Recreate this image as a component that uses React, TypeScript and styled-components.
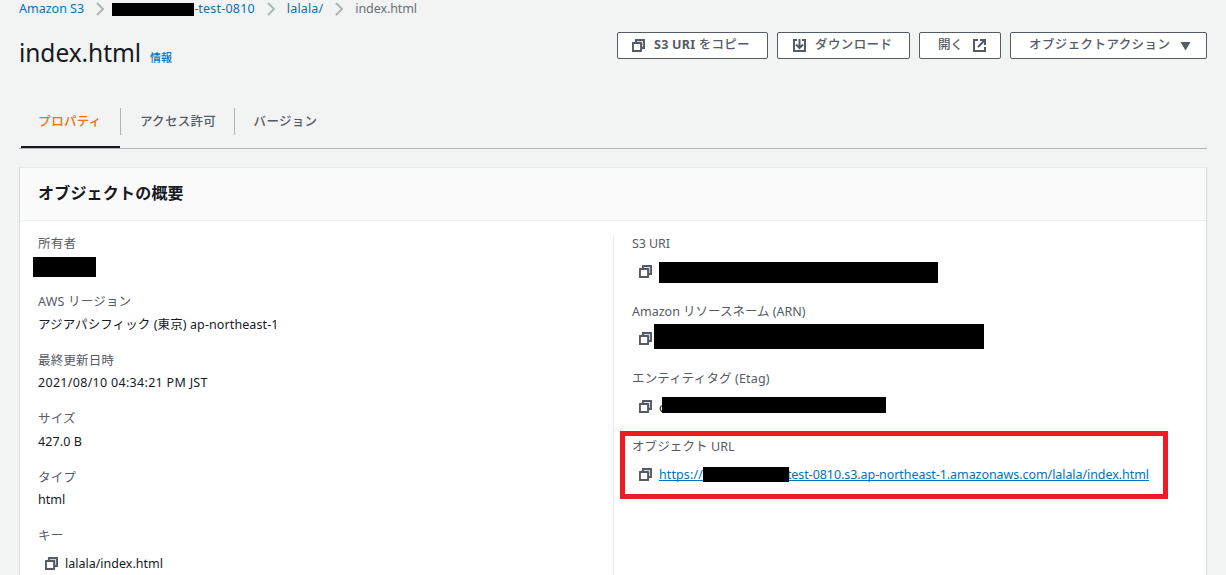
import React from 'react';
import styled, { createGlobalStyle } from 'styled-components';

const GlobalStyle = createGlobalStyle`
  * { box-sizing: border-box; }
  html, body { margin: 0; height: 575px; overflow: hidden; }
  body {
    background: #f2f3f3;
    color: #16191f;
    font-family: "Noto Sans", "Noto Sans CJK JP", sans-serif;
    font-size: 12.5px;
  }
`;

const Page = styled.main`
  height: 575px;
  overflow: hidden;
  padding: 0 19px;
`;

const Text = styled.span<{ $track?: number }>`
  letter-spacing: ${(p) => p.$track ?? 0}px;
  white-space: nowrap;
`;

const Link = styled.a<{ $track?: number; $underline?: boolean }>`
  color: #0073bb;
  letter-spacing: ${(p) => p.$track ?? 0}px;
  text-decoration: ${(p) => (p.$underline ? 'underline' : 'none')};
  text-decoration-thickness: 1px;
  text-decoration-skip-ink: none;
  text-underline-offset: 1px;
  white-space: nowrap;
`;

const Redaction = styled.span<{ $w: number; $h: number; $ml?: number; $mr?: number; $mt?: number }>`
  flex: none;
  display: block;
  position: relative;
  z-index: 1;
  width: ${(p) => p.$w}px;
  height: ${(p) => p.$h}px;
  margin-left: ${(p) => p.$ml ?? 0}px;
  margin-right: ${(p) => p.$mr ?? 0}px;
  margin-top: ${(p) => p.$mt ?? 0}px;
  background: #000;
`;

const Breadcrumbs = styled.nav`
  display: flex;
  align-items: center;
  height: 18px;
  line-height: 18px;
`;

const Current = styled(Text)`
  color: #687078;
`;

const ChevronSvg = styled.svg`
  flex: none;
  width: 8px;
  height: 14px;
  margin: 0 12px;
`;

const Header = styled.header`
  display: flex;
  justify-content: space-between;
  height: 88px;
`;

const TitleGroup = styled.div`
  display: flex;
  align-items: baseline;
  gap: 9px;
  padding-top: 18px;
  height: 54px;
`;

const Title = styled.h1`
  margin: 0;
  font-size: 24.5px;
  font-weight: 400;
  line-height: 34px;
  letter-spacing: -0.05px;
`;

const Info = styled.a`
  color: #0073bb;
  font-size: 11px;
  font-weight: 500;
`;

const Actions = styled.div`
  display: flex;
  gap: 9px;
  padding-top: 14px;
`;

const Button = styled.button<{ $w: number; $pl: number; $gap?: number }>`
  display: flex;
  align-items: center;
  gap: ${(p) => p.$gap ?? 9}px;
  width: ${(p) => p.$w}px;
  height: 27px;
  padding: 0 0 0 ${(p) => p.$pl}px;
  border: 1px solid #545b64;
  border-radius: 2px;
  background: #fff;
  color: #545b64;
  font: 500 12.5px/20px "Noto Sans", "Noto Sans CJK JP", sans-serif;

  ${Text} {
    margin-top: -2px;
  }
`;

const Strong = styled.b`
  font-weight: 700;
`;

const Icon = styled.svg`
  flex: none;
  width: 13px;
  height: 13px;
  fill: none;
  stroke: #545b64;
  stroke-width: 2;
`;

const Tabs = styled.div`
  display: flex;
  height: 43px;
  border-bottom: 1px solid #aab7b8;
`;

const Tab = styled.div<{ $active?: boolean; $w: number }>`
  position: relative;
  display: flex;
  justify-content: center;
  width: ${(p) => p.$w}px;
  height: 42px;
  line-height: 32px;
  color: ${(p) => (p.$active ? '#ec7211' : '#545b64')};
  font-weight: 500;
  &:not(:last-child)::before {
    content: '';
    position: absolute;
    right: 0;
    top: 2px;
    width: 1px;
    height: 27px;
    background: #aab7b8;
  }
  &::after {
    content: '';
    display: ${(p) => (p.$active ? 'block' : 'none')};
    position: absolute;
    left: 2px;
    right: 1px;
    bottom: 0;
    height: 2px;
    background: #16191f;
  }
`;

const Panel = styled.section`
  margin-top: 18px;
  height: 420px;
  border: 1px solid #d5dbdb;
  border-top-color: #eaeded;
  background: #fff;
`;

const PanelHeader = styled.div`
  height: 53px;
  padding: 0 18px;
  border-bottom: 1px solid #eaeded;
  background: #fafafa;
`;

const PanelTitle = styled.h2`
  margin: 0;
  font-size: 16px;
  font-weight: 700;
  line-height: 50px;
  letter-spacing: 0.2px;
`;

const Columns = styled.div`
  display: flex;
  padding-top: 14px;
`;

const Column = styled.div<{ $w?: number; $divided?: boolean }>`
  width: ${(p) => (p.$w ? `${p.$w}px` : 'auto')};
  height: 360px;
  padding-left: 18px;
  border-left: ${(p) => (p.$divided ? '1px solid #eaeded' : '0')};
`;

const Field = styled.div<{ $copy?: boolean }>`
  position: relative;
  height: ${(p) => (p.$copy ? 67.6 : 58.4)}px;
`;

const Label = styled.div<{ $track?: number }>`
  height: 18px;
  line-height: 18px;
  color: #545b64;
  letter-spacing: ${(p) => p.$track ?? 0.2}px;
  white-space: nowrap;
`;

const Value = styled.div<{ $track?: number }>`
  height: 20px;
  margin-top: 3.6px;
  line-height: 19px;
  letter-spacing: ${(p) => p.$track ?? 0}px;
  white-space: nowrap;
`;

const CopyValue = styled.div`
  display: flex;
  align-items: center;
  height: 28px;
  margin-top: 4px;
  padding-left: 7px;

  > svg {
    margin-top: 0.8px;
  }
`;

const CopyText = styled.span`
  display: flex;
  align-items: center;
  padding: 2px 0 0 7px;
`;

const Highlight = styled.div`
  position: absolute;
  left: -12px;
  top: -7px;
  width: 548px;
  height: 68px;
  border: 5px solid #ed1c24;
  pointer-events: none;
`;

const Chevron = () => (
  <ChevronSvg viewBox="0 0 8 14">
    <path d="M1 1l6 6-6 6" fill="none" stroke="#aab7b8" strokeWidth="2" />
  </ChevronSvg>
);

const CopyIcon = () => (
  <Icon viewBox="0 0 13 13" strokeWidth="1.8">
    <path d="M3.900 3.500V.900h8.200v8.200H9.500" fill="#d5d8db" strokeLinejoin="round" />
    <path d="M.900 3.900h8.200v8.200H.900z" fill="#fff" strokeLinejoin="round" />
  </Icon>
);

const DownloadIcon = () => (
  <Icon viewBox="0 0 13 13">
    <path d="M4 1H1v11h11V1H9" />
    <path d="M6.500 0v8M3 5.500l3.500 3.500L10 5.500" />
  </Icon>
);

const ExternalIcon = () => (
  <Icon viewBox="0 0 13 13">
    <path d="M5 1H1v11h11V8" />
    <path d="M7 1h5v5M12 1L5 8" />
  </Icon>
);

const CaretIcon = () => (
  <Icon viewBox="0 0 13 13">
    <path d="M1.500 3h10l-5 8.500z" fill="#545b64" stroke="none" />
  </Icon>
);

export default function App() {
  return (
    <>
      <GlobalStyle />
      <Page>
        <Breadcrumbs>
          <Link>Amazon S3</Link>
          <Chevron />
          <Redaction $w={82} $h={13} $ml={-4} $mt={1} />
          <Link $track={0.2}>-test-0810</Link>
          <Chevron />
          <Link $track={0.15}>lalala/</Link>
          <Chevron />
          <Current $track={-0.08}>index.html</Current>
        </Breadcrumbs>

        <Header>
          <TitleGroup>
            <Title>index.html</Title>
            <Info>情報</Info>
          </TitleGroup>
          <Actions>
            <Button $w={151} $pl={14}><CopyIcon /><Text $track={0.25}><Strong>S3 URI</Strong> をコピー</Text></Button>
            <Button $w={133} $pl={15}><DownloadIcon /><Text $track={0.4}>ダウンロード</Text></Button>
            <Button $w={82} $pl={18} $gap={10}><Text>開く</Text><ExternalIcon /></Button>
            <Button $w={197} $pl={18}><Text $track={0.4}>オブジェクトアクション</Text><CaretIcon /></Button>
          </Actions>
        </Header>

        <Tabs>
          <Tab $active $w={102}><Text $track={0.3}>プロパティ</Text></Tab>
          <Tab $w={114}><Text $track={0.3}>アクセス許可</Text></Tab>
          <Tab $w={101}><Text $track={0.3}>バージョン</Text></Tab>
        </Tabs>

        <Panel>
          <PanelHeader><PanelTitle>オブジェクトの概要</PanelTitle></PanelHeader>
          <Columns>
            <Column $w={593}>
              <Field>
                <Label>所有者</Label>
                <Redaction $w={63} $h={20} $ml={-5} $mt={4} />
              </Field>
              <Field>
                <Label>AWS リージョン</Label>
                <Value $track={0.1}>アジアパシフィック (東京) ap-northeast-1</Value>
              </Field>
              <Field>
                <Label>最終更新日時</Label>
                <Value $track={0.3}>2021/08/10 04:34:21 PM JST</Value>
              </Field>
              <Field>
                <Label>サイズ</Label>
                <Value $track={0.1}>427.0 B</Value>
              </Field>
              <Field>
                <Label>タイプ</Label>
                <Value>html</Value>
              </Field>
              <Field $copy>
                <Label>キー</Label>
                <CopyValue><CopyIcon /><CopyText>lalala/index.html</CopyText></CopyValue>
              </Field>
            </Column>
            <Column $divided>
              <Field $copy>
                <Label $track={-0.1}>S3 URI</Label>
                <CopyValue><CopyIcon /><Redaction $w={279} $h={21} $ml={7} $mt={2} /></CopyValue>
              </Field>
              <Field $copy>
                <Label $track={0}>Amazon リソースネーム (ARN)</Label>
                <CopyValue><CopyIcon /><Redaction $w={330} $h={25} $ml={2} $mt={-5} /></CopyValue>
              </Field>
              <Field $copy>
                <Label $track={0.15}>エンティティタグ (Etag)</Label>
                <CopyValue><CopyIcon /><CopyText>c</CopyText><Redaction $w={224} $h={16} $ml={-3} $mt={-2} /></CopyValue>
              </Field>
              <Field $copy>
                <Label $track={0.1}>オブジェクト URL</Label>
                <CopyValue>
                  <CopyIcon />
                  <CopyText>
                    <Link $underline $track={0.1}>https://</Link>
                    <Redaction $w={86} $h={15} $mr={-2} />
                    <Link $underline $track={-0.065}>test-0810.s3.ap-northeast-1.amazonaws.com/lalala/index.html</Link>
                  </CopyText>
                </CopyValue>
                <Highlight />
              </Field>
            </Column>
          </Columns>
        </Panel>
      </Page>
    </>
  );
}
